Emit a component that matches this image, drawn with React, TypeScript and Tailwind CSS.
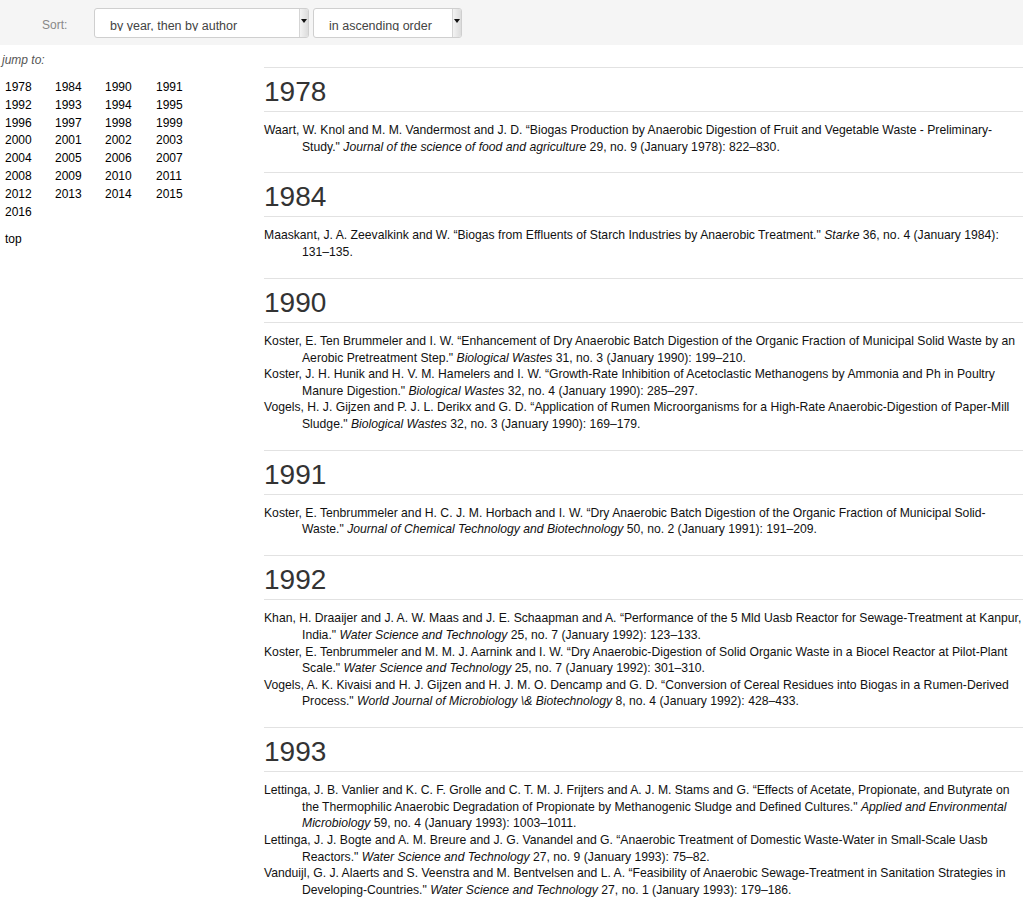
import React from 'react';

type Entry = { head: string; journal: string; tail: string };
type Section = { year: string; entries: Entry[] };

const years = [
  '1978', '1984', '1990', '1991', '1992', '1993', '1994', '1995', '1996', '1997', '1998', '1999',
  '2000', '2001', '2002', '2003', '2004', '2005', '2006', '2007', '2008', '2009', '2010', '2011',
  '2012', '2013', '2014', '2015', '2016',
];

const sections: Section[] = [
  {
    year: '1978',
    entries: [
      {
        head: 'Waart, W. Knol and M. M. Vandermost and J. D. “Biogas Production by Anaerobic Digestion of Fruit and Vegetable Waste - Preliminary-Study." ',
        journal: 'Journal of the science of food and agriculture',
        tail: ' 29, no. 9 (January 1978): 822–830.',
      },
    ],
  },
  {
    year: '1984',
    entries: [
      {
        head: 'Maaskant, J. A. Zeevalkink and W. “Biogas from Effluents of Starch Industries by Anaerobic Treatment." ',
        journal: 'Starke',
        tail: ' 36, no. 4 (January 1984): 131–135.',
      },
    ],
  },
  {
    year: '1990',
    entries: [
      {
        head: 'Koster, E. Ten Brummeler and I. W. “Enhancement of Dry Anaerobic Batch Digestion of the Organic Fraction of Municipal Solid Waste by an Aerobic Pretreatment Step." ',
        journal: 'Biological Wastes',
        tail: ' 31, no. 3 (January 1990): 199–210.',
      },
      {
        head: 'Koster, J. H. Hunik and H. V. M. Hamelers and I. W. “Growth-Rate Inhibition of Acetoclastic Methanogens by Ammonia and Ph in Poultry Manure Digestion." ',
        journal: 'Biological Wastes',
        tail: ' 32, no. 4 (January 1990): 285–297.',
      },
      {
        head: 'Vogels, H. J. Gijzen and P. J. L. Derikx and G. D. “Application of Rumen Microorganisms for a High-Rate Anaerobic-Digestion of Paper-Mill Sludge." ',
        journal: 'Biological Wastes',
        tail: ' 32, no. 3 (January 1990): 169–179.',
      },
    ],
  },
  {
    year: '1991',
    entries: [
      {
        head: 'Koster, E. Tenbrummeler and H. C. J. M. Horbach and I. W. “Dry Anaerobic Batch Digestion of the Organic Fraction of Municipal Solid-Waste." ',
        journal: 'Journal of Chemical Technology and Biotechnology',
        tail: ' 50, no. 2 (January 1991): 191–209.',
      },
    ],
  },
  {
    year: '1992',
    entries: [
      {
        head: 'Khan, H. Draaijer and J. A. W. Maas and J. E. Schaapman and A. “Performance of the 5 Mld Uasb Reactor for Sewage-Treatment at Kanpur, India." ',
        journal: 'Water Science and Technology',
        tail: ' 25, no. 7 (January 1992): 123–133.',
      },
      {
        head: 'Koster, E. Tenbrummeler and M. M. J. Aarnink and I. W. “Dry Anaerobic-Digestion of Solid Organic Waste in a Biocel Reactor at Pilot-Plant Scale." ',
        journal: 'Water Science and Technology',
        tail: ' 25, no. 7 (January 1992): 301–310.',
      },
      {
        head: 'Vogels, A. K. Kivaisi and H. J. Gijzen and H. J. M. O. Dencamp and G. D. “Conversion of Cereal Residues into Biogas in a Rumen-Derived Process." ',
        journal: 'World Journal of Microbiology \\& Biotechnology',
        tail: ' 8, no. 4 (January 1992): 428–433.',
      },
    ],
  },
  {
    year: '1993',
    entries: [
      {
        head: 'Lettinga, J. B. Vanlier and K. C. F. Grolle and C. T. M. J. Frijters and A. J. M. Stams and G. “Effects of Acetate, Propionate, and Butyrate on the Thermophilic Anaerobic Degradation of Propionate by Methanogenic Sludge and Defined Cultures." ',
        journal: 'Applied and Environmental Microbiology',
        tail: ' 59, no. 4 (January 1993): 1003–1011.',
      },
      {
        head: 'Lettinga, J. J. Bogte and A. M. Breure and J. G. Vanandel and G. “Anaerobic Treatment of Domestic Waste-Water in Small-Scale Uasb Reactors." ',
        journal: 'Water Science and Technology',
        tail: ' 27, no. 9 (January 1993): 75–82.',
      },
      {
        head: 'Vanduijl, G. J. Alaerts and S. Veenstra and M. Bentvelsen and L. A. “Feasibility of Anaerobic Sewage-Treatment in Sanitation Strategies in Developing-Countries." ',
        journal: 'Water Science and Technology',
        tail: ' 27, no. 1 (January 1993): 179–186.',
      },
    ],
  },
];

function FakeSelect({ label, width }: { label: string; width: string }) {
  return (
    <div className={`${width} h-[30px] flex bg-white border border-[#cfcfcf] rounded-[3px] overflow-hidden`}>
      <div className="flex-1 h-[22px] pl-[15px] pt-[7px] text-[12.5px] leading-[20px] text-[#444] overflow-hidden whitespace-nowrap">
        {label}
      </div>
      <div className="w-[9px] bg-gradient-to-r from-[#f3f3f3] to-[#dcdcdc] border-l border-[#d5d5d5] flex items-center justify-center">
        <svg width="6" height="4" viewBox="0 0 6 4" className="mb-[4px]">
          <path d="M0 0h6L3 4z" fill="#111" />
        </svg>
      </div>
    </div>
  );
}

export default function App() {
  return (
    <div className="min-h-screen bg-white text-[#222]" style={{ fontFamily: '"Liberation Sans", Arial, sans-serif' }}>
      {/* Sort bar */}
      <div className="h-[45px] bg-[#f5f5f5] flex items-start pt-[8px]">
        <span className="w-[94px] pl-[42px] pt-[8px] text-[12px] text-[#888]">Sort:</span>
        <FakeSelect label="by year, then by author" width="w-[215px]" />
        <div className="w-[4px]" />
        <FakeSelect label="in ascending order" width="w-[149px]" />
      </div>

      <div className="flex">
        {/* Jump list */}
        <div className="w-[264px] shrink-0 text-[12px]">
          <div className="pl-[2px] pt-[7px] italic text-[#555] leading-[16px]">jump to:</div>
          <div className="grid grid-cols-[50px_50px_51px_50px] pl-[5px] pt-[11px] text-black leading-[17.8px]">
            {years.map(y => (
              <a key={y} href={`#y${y}`}>{y}</a>
            ))}
          </div>
          <div className="pl-[5px] pt-[10px] text-black leading-[16px]">top</div>
        </div>

        {/* Bibliography */}
        <div className="flex-1 pt-[22px]">
          {sections.map(s => (
            <div key={s.year} id={`y${s.year}`} className="border-t border-[#e2e2e2] pb-[17.3px]">
              <h2 className="border-b border-[#e2e2e2] pt-[9px] pb-[4px] text-[28px] leading-[30px] font-normal text-[#333]">
                {s.year}
              </h2>
              <div className="pt-[10px] text-[12.18px] leading-[16.6px] text-[#111]">
                {s.entries.map((e, i) => (
                  <p key={i} className="pl-[38px] -indent-[38px]">
                    {e.head}
                    <i>{e.journal}</i>
                    {e.tail}
                  </p>
                ))}
              </div>
            </div>
          ))}
        </div>
      </div>
    </div>
  );
}
